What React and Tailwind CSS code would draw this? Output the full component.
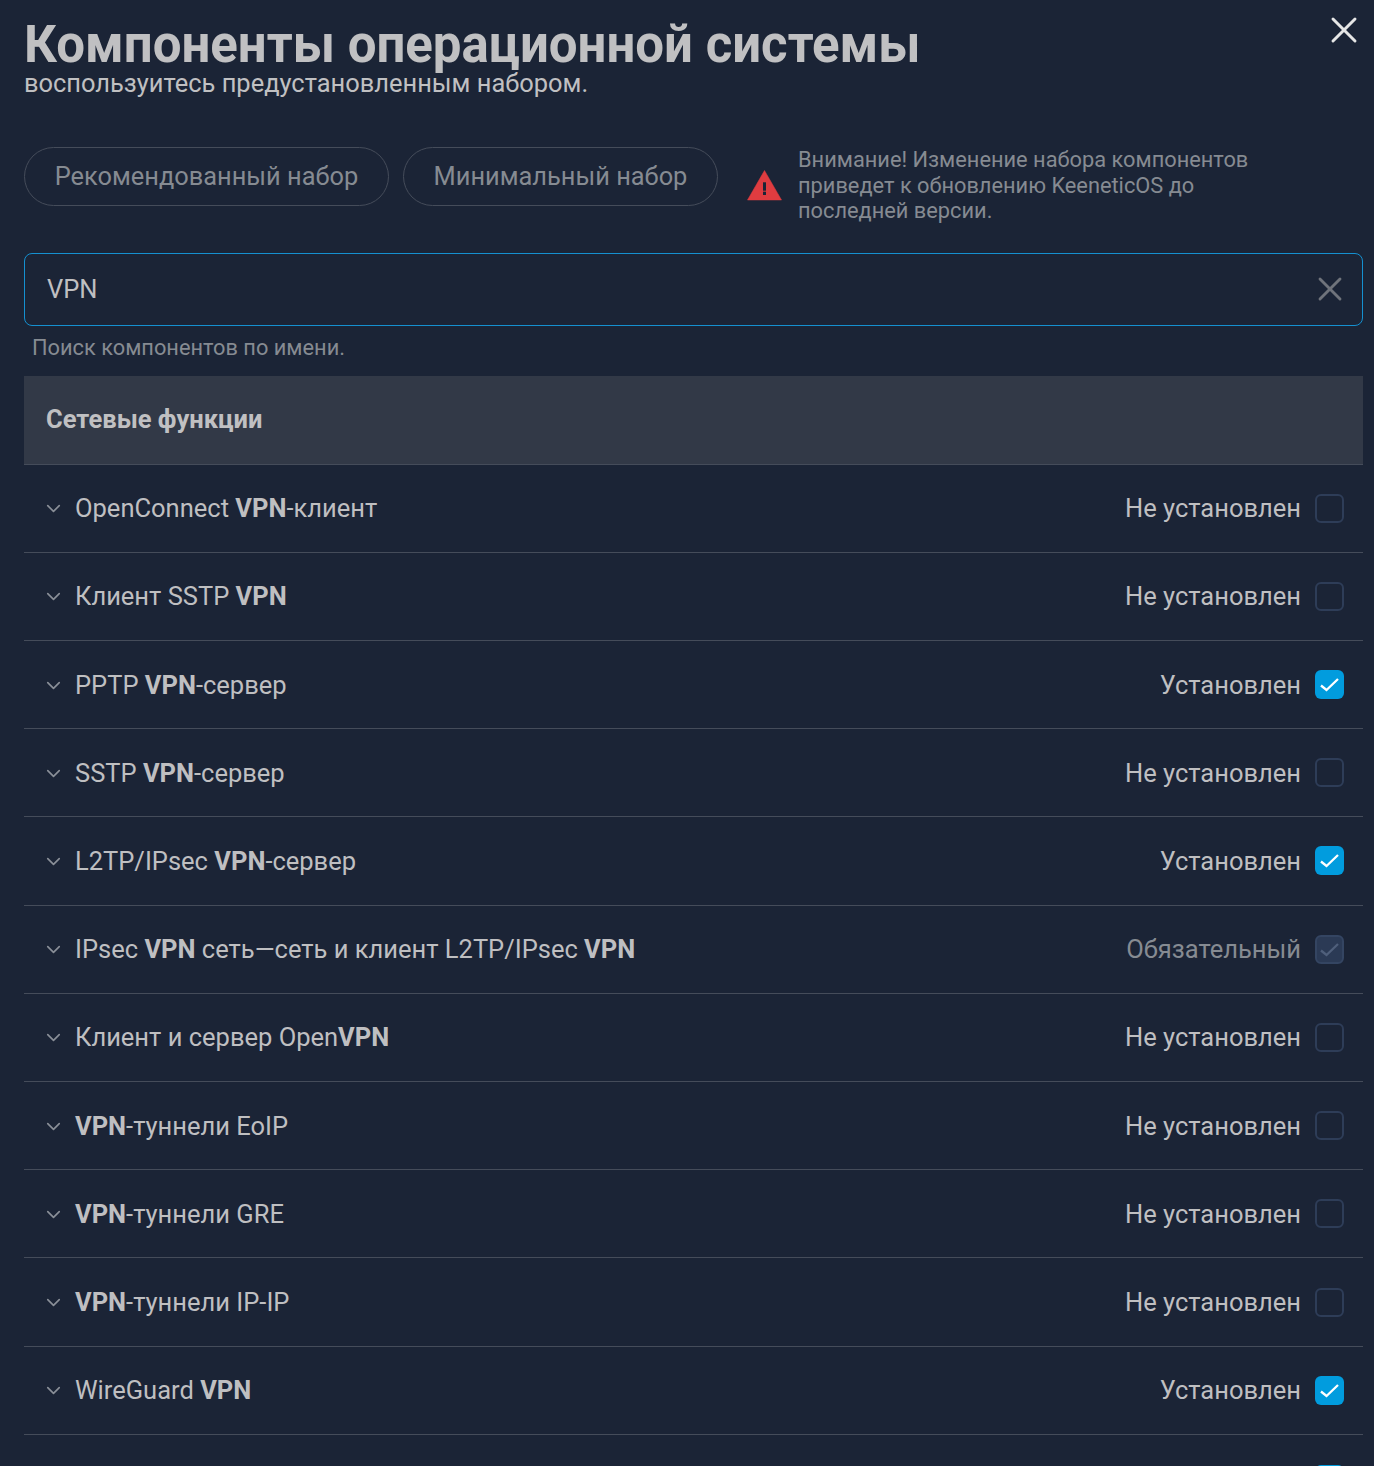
import React from 'react'
import { X, ChevronDown } from 'lucide-react'

const components = [
  { name: <>OpenConnect <b>VPN</b>-клиент</>, status: 'off' },
  { name: <>Клиент SSTP <b>VPN</b></>, status: 'off' },
  { name: <>PPTP <b>VPN</b>-сервер</>, status: 'on' },
  { name: <>SSTP <b>VPN</b>-сервер</>, status: 'off' },
  { name: <>L2TP/IPsec <b>VPN</b>-сервер</>, status: 'on' },
  { name: <>IPsec <b>VPN</b> сеть—сеть и клиент L2TP/IPsec <b>VPN</b></>, status: 'required' },
  { name: <>Клиент и сервер Open<b>VPN</b></>, status: 'off' },
  { name: <><b>VPN</b>-туннели EoIP</>, status: 'off' },
  { name: <><b>VPN</b>-туннели GRE</>, status: 'off' },
  { name: <><b>VPN</b>-туннели IP-IP</>, status: 'off' },
  { name: <>WireGuard <b>VPN</b></>, status: 'on' },
]

const statusText = { off: 'Не установлен', on: 'Установлен', required: 'Обязательный' }

const Tick = ({ color }) => (
  <svg width="19" height="15" viewBox="0 0 19 15" fill="none">
    <path d="M1 8.5L6.5 13L18 2" stroke={color} strokeWidth="2.3" />
  </svg>
)

const Checkbox = ({ status }) => {
  if (status === 'on') {
    return (
      <span className="flex h-[29px] w-[29px] items-center justify-center rounded-[6px] bg-[#019cde]">
        <Tick color="#ffffff" />
      </span>
    )
  }
  if (status === 'required') {
    return (
      <span className="flex h-[29px] w-[29px] items-center justify-center rounded-[6px] border-2 border-[#344562] bg-[#2b3a55]">
        <Tick color="#4f5f7b" />
      </span>
    )
  }
  return <span className="block h-[29px] w-[29px] rounded-[6px] border-2 border-[#2e3d58]" />
}

const Row = ({ item }) => (
  <div className="flex h-[88.22px] items-center justify-between border-b border-[#454c5a] pl-[18px] pr-[19px] text-[25.5px] leading-[30px] text-[#bfbfc1]">
    <div className="flex items-center">
      <ChevronDown size={23} strokeWidth={1.7} className="mr-[10px] mt-[1px] text-[#8a8f98]" />
      <span className="[&_b]:font-bold">{item.name}</span>
    </div>
    <div className="flex items-center gap-[14px]">
      <span className={item.status === 'required' ? 'text-[#868b92]' : ''}>{statusText[item.status]}</span>
      <Checkbox status={item.status} />
    </div>
  </div>
)

const App = () => {
  return (
    <div className="relative h-[1466px] w-[1374px] overflow-hidden bg-[#1b2436] pl-[24px] pr-[11px] font-['Roboto',sans-serif]">
      <button className="absolute right-[8px] top-[8px] text-[#e6e6e6]">
        <X size={44} strokeWidth={1.6} />
      </button>

      <h1 className="pt-[17px] text-[51px] font-bold leading-[56px] text-[#c0c0c2]">Компоненты операционной системы</h1>
      <p className="text-[25.45px] leading-[20px] text-[#c0c0c2]">воспользуитесь предустановленным набором.</p>

      <div className="mt-[54px] flex items-start">
        <button className="h-[59px] w-[365px] rounded-[30px] border border-[#454c5a] text-[25.4px] text-[#868b92]">Рекомендованный набор</button>
        <button className="ml-[14px] h-[59px] w-[315px] rounded-[30px] border border-[#454c5a] text-[25.4px] text-[#868b92]">Минимальный набор</button>
        <svg className="ml-[29px] mt-[22px]" width="35" height="32" viewBox="0 0 35 32">
          <path d="M17.5 1.5L34.5 31H0.5Z" fill="#df3c40" stroke="#df3c40" strokeWidth="0.5" strokeLinejoin="round" />
          <rect x="16" y="13.3" width="3" height="8.4" fill="#1b2436" />
          <rect x="16" y="22.7" width="3" height="3.3" fill="#1b2436" />
        </svg>
        <p className="ml-[16px] w-[480px] text-[21.8px] leading-[25.5px] text-[#868b92]">Внимание! Изменение набора компонентов приведет к обновлению KeeneticOS до последней версии.</p>
      </div>

      <div className="mt-[29px] flex h-[73px] items-center justify-between rounded-[8px] border border-[#1590d0] pl-[22px] pr-[12px] text-[25.5px] text-[#bfbfc1]">
        <span>VPN</span>
        <X size={40} strokeWidth={1.7} className="text-[#6f737b]" />
      </div>
      <p className="mt-[9px] pl-[8px] text-[21.8px] leading-[26px] text-[#868b92]">Поиск компонентов по имени.</p>

      <div className="mt-[15px] flex h-[89px] items-center border-b border-[#454c5a] bg-[#323947] pl-[22px] text-[25.5px] font-bold text-[#c0c0c2]">Сетевые функции</div>
      {components.map((item, i) => <Row key={i} item={item} />)}
      <div className="mt-[30px] flex justify-end pr-[19px]">
        <span className="block h-[29px] w-[29px] rounded-[6px] bg-[#019cde]" />
      </div>
    </div>
  )
}

export default App
